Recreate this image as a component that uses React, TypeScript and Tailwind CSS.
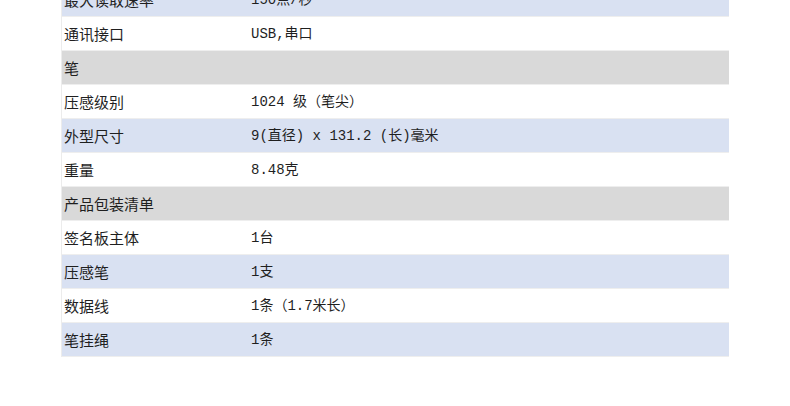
const rows: { label: string; value?: string; kind: "blue" | "white" | "gray" }[] = [
  { label: "最大读取速率", value: "150点/秒", kind: "blue" },
  { label: "通讯接口", value: "USB,串口", kind: "white" },
  { label: "笔", kind: "gray" },
  { label: "压感级别", value: "1024 级（笔尖）", kind: "white" },
  { label: "外型尺寸", value: "9(直径) x 131.2 (长)毫米", kind: "blue" },
  { label: "重量", value: "8.48克", kind: "white" },
  { label: "产品包装清单", kind: "gray" },
  { label: "签名板主体", value: "1台", kind: "white" },
  { label: "压感笔", value: "1支", kind: "blue" },
  { label: "数据线", value: "1条（1.7米长）", kind: "white" },
  { label: "笔挂绳", value: "1条", kind: "blue" },
];

const bg = {
  blue: "bg-[#d9e1f2]",
  white: "bg-white",
  gray: "bg-[#d9d9d9]",
};

export default function App() {
  return (
    <div className="w-[790px] h-[406px] bg-white overflow-hidden text-[#1f1f1f] text-[15px] font-['Noto_Sans_CJK_SC',sans-serif]">
      {/* spec table, first row is cut off at the top */}
      <div className="ml-[61px] w-[668px] -mt-[17px] border-l border-[#ececec]">
        {rows.map((row) => (
          <div
            key={row.label}
            className={`flex items-center h-[34px] border-b border-[#eeeeee] ${bg[row.kind]}`}
          >
            <div className="w-[189px] pl-[2px] shrink-0 pt-[1px]">{row.label}</div>
            {row.value && (
              <div className="font-['Liberation_Mono','Noto_Sans_CJK_SC',monospace] text-[14px] pt-[1px]">{row.value}</div>
            )}
          </div>
        ))}
      </div>
    </div>
  );
}
